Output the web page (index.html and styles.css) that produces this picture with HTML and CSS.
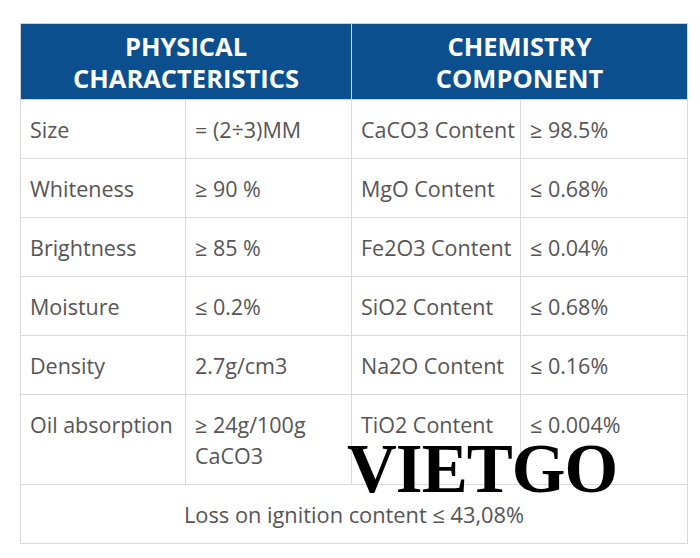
FILE: index.html
```html
<!DOCTYPE html>
<html>
<head>
<meta charset="utf-8">
<link rel="stylesheet" href="styles.css">
</head>
<body>
<div class="wrap">
  <table class="spec">
    <colgroup>
      <col class="c1"><col class="c2"><col class="c3"><col class="c4">
    </colgroup>
    <thead>
      <tr>
        <th colspan="2">PHYSICAL<br>CHARACTERISTICS</th>
        <th colspan="2">CHEMISTRY<br>COMPONENT</th>
      </tr>
    </thead>
    <tbody>
      <tr><td>Size</td><td>= (2÷3)MM</td><td>CaCO3 Content</td><td>≥ 98.5%</td></tr>
      <tr><td>Whiteness</td><td>≥ 90 %</td><td>MgO Content</td><td>≤ 0.68%</td></tr>
      <tr><td>Brightness</td><td>≥ 85 %</td><td>Fe2O3 Content</td><td>≤ 0.04%</td></tr>
      <tr><td>Moisture</td><td>≤ 0.2%</td><td>SiO2 Content</td><td>≤ 0.68%</td></tr>
      <tr><td>Density</td><td>2.7g/cm3</td><td>Na2O Content</td><td>≤ 0.16%</td></tr>
      <tr class="top"><td>Oil absorption</td><td>≥ 24g/100g CaCO3</td><td>TiO2 Content</td><td>≤ 0.004%</td></tr>
      <tr><td colspan="4" class="full">Loss on ignition content ≤ 43,08%</td></tr>
    </tbody>
  </table>
  <div class="mark">VIETGO</div>
</div>
</body>
</html>
```
FILE: styles.css
```css
html, body {
  margin: 0;
  padding: 0;
  background: #ffffff;
}
.wrap {
  position: relative;
  padding: 23px 0 0 20px;
  width: 668px;
}
.spec {
  border-collapse: collapse;
  table-layout: fixed;
  width: 667px;
  font-family: "Open Sans", "Noto Sans", sans-serif;
}
.c1 { width: 165px; }
.c2 { width: 166px; }
.c3 { width: 169px; }
.c4 { width: 167px; }
.spec th {
  background: #0b4f8f;
  color: #ffffff;
  font-weight: 700;
  font-size: 25.5px;
  line-height: 32px;
  padding: 6px 2px 5px;
  height: 64px;
  border: 1px solid #c9d3de;
  border-right: 1px solid #d6dde6;
  text-align: center;
}
.spec td {
  border: 1px solid #d9d9d9;
  color: #555555;
  font-size: 21.5px;
  line-height: 31px;
  padding: 14px 9px 13px 9px;
  height: 31px;
  vertical-align: middle;
  white-space: nowrap;
  overflow: visible;
}
.spec tr.top td {
  vertical-align: top;
  white-space: normal;
}
.spec td.full {
  text-align: center;
  font-size: 21.8px;
}
.mark {
  position: absolute;
  left: 347px;
  top: 429px;
  font-family: "Liberation Serif", "Times New Roman", serif;
  font-weight: 700;
  font-size: 69px;
  line-height: 80px;
  letter-spacing: -1px;
  color: #000000;
}
```
